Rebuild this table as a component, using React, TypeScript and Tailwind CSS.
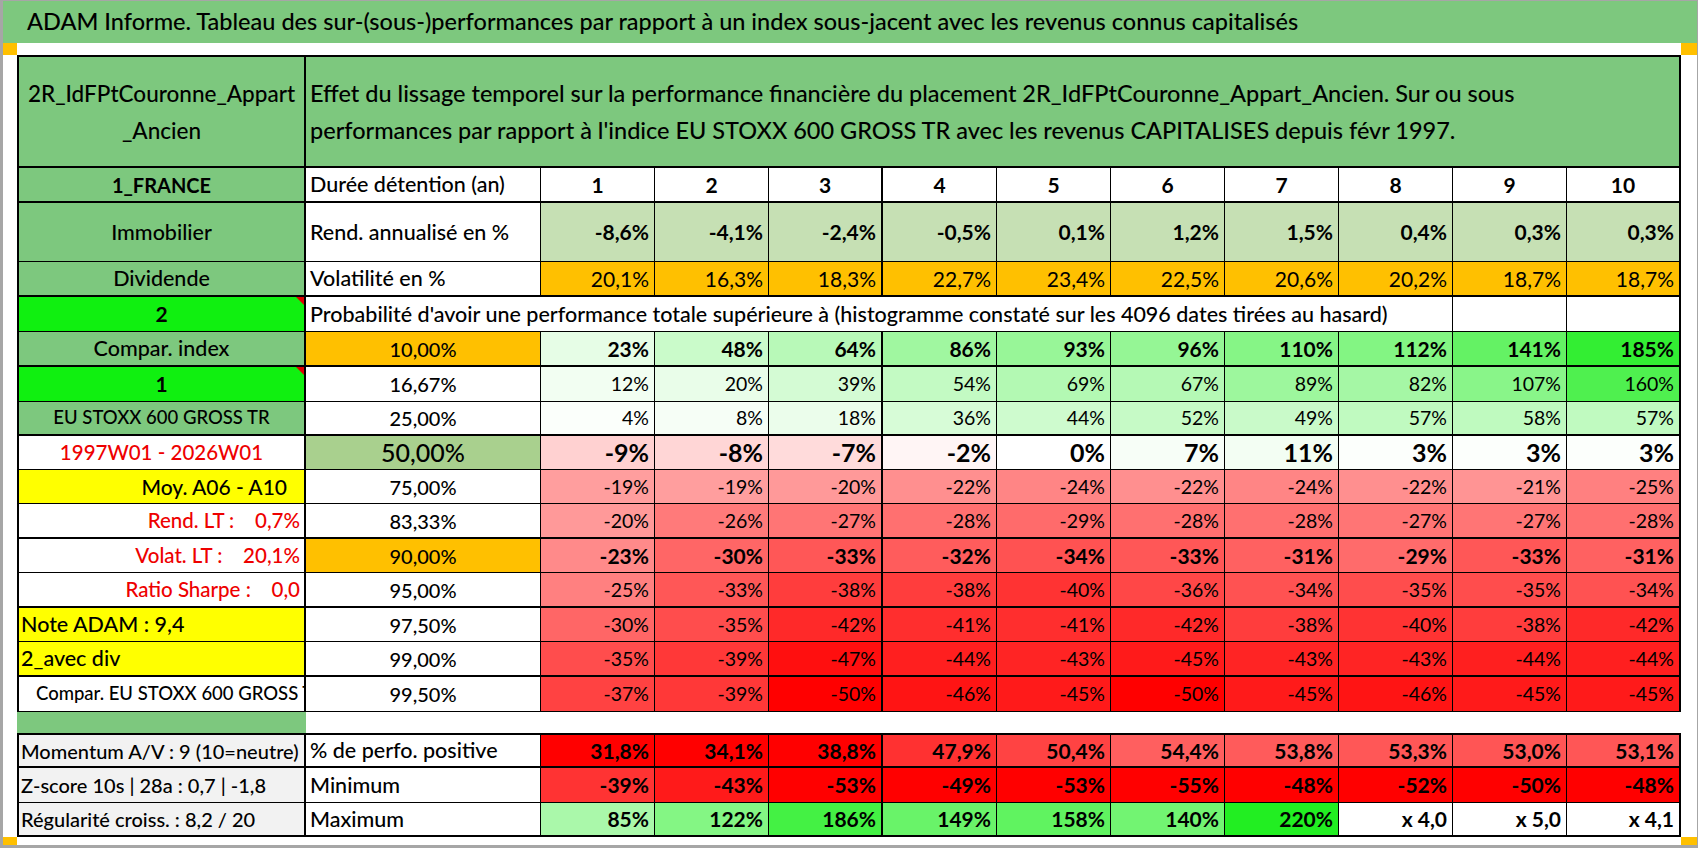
import React from 'react';

type RGB = [number, number, number];

const WHITE: RGB = [255, 255, 255];
const RED: RGB = [255, 0, 0];
const GREEN: RGB = [51, 238, 51];

function mix(to: RGB, t: number) {
  const k = Math.max(0, Math.min(1, t));
  const c = WHITE.map((w, i) => Math.round(w + (to[i] - w) * k));
  return `rgb(${c[0]}, ${c[1]}, ${c[2]})`;
}

// échelle commune au bloc des probabilités : rouge -50% / blanc 0 / vert 185%
const probColor = (v: number) => (v >= 0 ? mix(GREEN, v / 185) : mix(RED, -v / 50));
const posColor = (v: number) => mix(RED, (77 - v) / 36);
const minColor = (v: number) => mix(RED, (-v - 7) / 40);
const maxColor = (v: number) => mix([34, 238, 34], v / 220);

const pct = (v: number) => `${v}%`;
const pct1 = (v: number) => `${v.toFixed(1).replace('.', ',')}%`;

const GRID = 'grid grid-cols-[289px_235px_repeat(10,114px)]';

const BOLD = 'text-[21px] font-bold';
const LIGHT = 'text-[19.5px] font-normal';
const BIG = 'text-[25px] font-bold';

function rightBorder(col: number) {
  return col === 0 || col === 4 || col === 11 ? 'border-r-2' : 'border-r';
}

type CellProps = {
  col: number;
  thick?: boolean;
  top?: boolean;
  className?: string;
  style?: React.CSSProperties;
  children?: React.ReactNode;
};

function Cell({ col, thick, top, className = '', style, children }: CellProps) {
  return (
    <div
      className={`relative flex min-w-0 items-center overflow-hidden whitespace-nowrap border-black ${rightBorder(col)} ${
        thick ? 'border-b-2' : 'border-b'
      } ${top ? 'border-t-2' : ''} ${col === 0 ? 'border-l-2' : ''} ${className}`}
      style={style}
    >
      {children}
    </div>
  );
}

type ValuesProps = {
  vals: number[];
  thick?: boolean;
  top?: boolean;
  color: (v: number) => string;
  fmt?: (v: number) => string;
  text: string;
};

function Values({ vals, thick, top, color, fmt = pct, text }: ValuesProps) {
  return (
    <>
      {vals.map((v, i) => (
        <Cell
          key={i}
          col={i + 2}
          thick={thick}
          top={top}
          className={`justify-end pr-[5px] ${text}`}
          style={{ backgroundColor: color(v) }}
        >
          {fmt(v)}
        </Cell>
      ))}
    </>
  );
}

function Flag() {
  return <span className="absolute right-0 top-0 h-0 w-0 border-l-[8px] border-t-[8px] border-l-transparent border-t-[#e00000]" />;
}

const rend = [-8.6, -4.1, -2.4, -0.5, 0.1, 1.2, 1.5, 0.4, 0.3, 0.3];
const vol = [20.1, 16.3, 18.3, 22.7, 23.4, 22.5, 20.6, 20.2, 18.7, 18.7];
const positive = [31.8, 34.1, 38.8, 47.9, 50.4, 54.4, 53.8, 53.3, 53.0, 53.1];
const minimum = [-39, -43, -53, -49, -53, -55, -48, -52, -50, -48];
const maximum = [85, 122, 186, 149, 158, 140, 220];

type ProbRow = {
  h: string;
  thick: boolean;
  label: React.ReactNode;
  labelCls: string;
  level: string;
  levelCls: string;
  vals: number[];
  text: string;
  flag?: boolean;
};

const probRows: ProbRow[] = [
  {
    h: 'h-[35px]', thick: true, label: 'Compar. index', labelCls: 'justify-center bg-[#7dc87e] text-[21.5px] font-medium',
    level: '10,00%', levelCls: 'bg-[#ffc000]', vals: [23, 48, 64, 86, 93, 96, 110, 112, 141, 185], text: BOLD,
  },
  {
    h: 'h-[35px]', thick: false, label: '1', labelCls: 'justify-center bg-[#10f010] text-[21px] font-bold', flag: true,
    level: '16,67%', levelCls: '', vals: [12, 20, 39, 54, 69, 67, 89, 82, 107, 160], text: LIGHT,
  },
  {
    h: 'h-[34px]', thick: true, label: 'EU STOXX 600 GROSS TR', labelCls: 'justify-center bg-[#7dc87e] text-[18.5px] font-medium',
    level: '25,00%', levelCls: '', vals: [4, 8, 18, 36, 44, 52, 49, 57, 58, 57], text: LIGHT,
  },
  {
    h: 'h-[34px]', thick: false, label: '1997W01 - 2026W01', labelCls: 'justify-center text-[20.5px] font-medium text-[#ee0000]',
    level: '50,00%', levelCls: 'bg-[#a9d08e] text-[25px]', vals: [-9, -8, -7, -2, 0, 7, 11, 3, 3, 3], text: BIG,
  },
  {
    h: 'h-[34px]', thick: false, label: 'Moy. A06 - A10', labelCls: 'justify-end pr-[17px] bg-[#ffff00] text-[21px] font-medium',
    level: '75,00%', levelCls: '', vals: [-19, -19, -20, -22, -24, -22, -24, -22, -21, -25], text: LIGHT,
  },
  {
    h: 'h-[35px]', thick: true, label: 'Rend. LT :    0,7%', labelCls: 'justify-end pr-[4px] text-[20.5px] font-medium text-[#ee0000] whitespace-pre',
    level: '83,33%', levelCls: '', vals: [-20, -26, -27, -28, -29, -28, -28, -27, -27, -28], text: LIGHT,
  },
  {
    h: 'h-[34px]', thick: false, label: 'Volat. LT :    20,1%', labelCls: 'justify-end pr-[4px] text-[20.5px] font-medium text-[#ee0000] whitespace-pre',
    level: '90,00%', levelCls: 'bg-[#ffc000]', vals: [-23, -30, -33, -32, -34, -33, -31, -29, -33, -31], text: BOLD,
  },
  {
    h: 'h-[35px]', thick: true, label: 'Ratio Sharpe :    0,0', labelCls: 'justify-end pr-[4px] text-[20.5px] font-medium text-[#ee0000] whitespace-pre',
    level: '95,00%', levelCls: '', vals: [-25, -33, -38, -38, -40, -36, -34, -35, -35, -34], text: LIGHT,
  },
  {
    h: 'h-[34px]', thick: false, label: 'Note ADAM : 9,4', labelCls: 'justify-start pl-[2px] bg-[#ffff00] text-[21.5px] font-medium',
    level: '97,50%', levelCls: '', vals: [-30, -35, -42, -41, -41, -42, -38, -40, -38, -42], text: LIGHT,
  },
  {
    h: 'h-[35px]', thick: true, label: '2_avec div', labelCls: 'justify-start pl-[2px] bg-[#ffff00] text-[21.5px] font-medium',
    level: '99,00%', levelCls: '', vals: [-35, -39, -47, -44, -43, -45, -43, -43, -44, -44], text: LIGHT,
  },
  {
    h: 'h-[35px]', thick: false, label: 'Compar. EU STOXX 600 GROSS TR', labelCls: 'justify-start pl-[17px] text-[18.5px] font-medium',
    level: '99,50%', levelCls: '', vals: [-37, -39, -50, -46, -45, -50, -45, -46, -45, -45], text: LIGHT,
  },
];

export default function App() {
  return (
    <div className="flex h-[848px] w-[1698px] flex-col overflow-hidden border border-b-[3px] border-l-[3px] border-[#a6a6a6] bg-white font-['Lato',sans-serif] text-black">
      <div className="flex h-[42px] shrink-0 items-center bg-[#7dc87e] pl-[24px] text-[23.5px] font-medium">
        ADAM Informe. Tableau des sur-(sous-)performances par rapport à un index sous-jacent avec les revenus connus capitalisés
      </div>
      <div className="flex h-[12px] shrink-0 justify-between">
        <div className="w-[14px] bg-[#ffc000]" />
        <div className="w-[16px] bg-[#ffc000]" />
      </div>

      <div className="flex shrink-0">
        <div className="w-[14px]" />
        <div className="w-[1664px]">
          {/* en-tête */}
          <div className={`${GRID} h-[113px]`}>
            <Cell col={0} top thick className="flex-col justify-center bg-[#7dc87e] text-[22.5px] font-medium leading-[37px]">
              <span>2R_IdFPtCouronne_Appart</span>
              <span>_Ancien</span>
            </Cell>
            <Cell col={11} top thick className="col-span-11 flex-col items-start justify-center bg-[#7dc87e] pl-[4px] text-[23.5px] font-medium leading-[37px]">
              <span>Effet du lissage temporel sur la performance financière du placement 2R_IdFPtCouronne_Appart_Ancien. Sur ou sous</span>
              <span>performances par rapport à l'indice EU STOXX 600 GROSS TR avec les revenus CAPITALISES depuis févr 1997.</span>
            </Cell>
          </div>

          <div className={`${GRID} h-[35px]`}>
            <Cell col={0} thick className="justify-center bg-[#7dc87e] text-[20px] font-bold">1_FRANCE</Cell>
            <Cell col={1} thick className="pl-[4px] text-[21.5px] font-medium">Durée détention (an)</Cell>
            {[1, 2, 3, 4, 5, 6, 7, 8, 9, 10].map((n, i) => (
              <Cell key={n} col={i + 2} thick className={`justify-center ${BOLD}`}>{n}</Cell>
            ))}
          </div>

          <div className={`${GRID} h-[59px]`}>
            <Cell col={0} className="justify-center bg-[#7dc87e] text-[21.5px] font-medium">Immobilier</Cell>
            <Cell col={1} className="pl-[4px] text-[21.5px] font-medium">Rend. annualisé en %</Cell>
            <Values vals={rend} color={() => '#c6e0b4'} fmt={pct1} text={BOLD} />
          </div>

          <div className={`${GRID} h-[35px]`}>
            <Cell col={0} thick className="justify-center bg-[#7dc87e] text-[21.5px] font-medium">Dividende</Cell>
            <Cell col={1} thick className="pl-[4px] text-[21.5px] font-medium">Volatilité en %</Cell>
            <Values vals={vol} thick color={() => '#ffc000'} fmt={pct1} text="text-[21px] font-normal" />
          </div>

          <div className={`${GRID} h-[35px]`}>
            <Cell col={0} className="justify-center bg-[#10f010] text-[21px] font-bold">
              2
              <Flag />
            </Cell>
            <Cell col={9} className="col-span-9 pl-[4px] text-[21.5px] font-medium">
              Probabilité d'avoir une performance totale supérieure à (histogramme constaté sur les 4096 dates tirées au hasard)
            </Cell>
            <Cell col={10} />
            <Cell col={11} />
          </div>

          {probRows.map((r) => (
            <div key={r.level} className={`${GRID} ${r.h}`}>
              <Cell col={0} thick={r.thick} className={r.labelCls}>
                {r.label}
                {r.flag && <Flag />}
              </Cell>
              <Cell col={1} thick={r.thick} className={`justify-center text-[20px] font-medium ${r.levelCls}`}>
                {r.level}
              </Cell>
              <Values vals={r.vals} thick={r.thick} color={probColor} text={r.text} />
            </div>
          ))}

          <div className={`${GRID} h-[21px]`}>
            <div className="bg-[#7dc87e]" />
          </div>

          <div className={`${GRID} h-[35px]`}>
            <Cell col={0} top thick className="bg-[#f2f2f2] pl-[2px] text-[20px] font-medium">Momentum A/V : 9 (10=neutre)</Cell>
            <Cell col={1} top thick className="pl-[4px] text-[21.5px] font-medium">% de perfo. positive</Cell>
            <Values vals={positive} top thick color={posColor} fmt={pct1} text={BOLD} />
          </div>
          <div className={`${GRID} h-[35px]`}>
            <Cell col={0} className="bg-[#f2f2f2] pl-[2px] text-[20px] font-medium">Z-score 10s | 28a : 0,7 | -1,8</Cell>
            <Cell col={1} className="pl-[4px] text-[21.5px] font-medium">Minimum</Cell>
            <Values vals={minimum} color={minColor} text={BOLD} />
          </div>
          <div className={`${GRID} h-[34px]`}>
            <Cell col={0} thick className="bg-[#f2f2f2] pl-[2px] text-[20px] font-medium">Régularité croiss. : 8,2 / 20</Cell>
            <Cell col={1} thick className="pl-[4px] text-[21.5px] font-medium">Maximum</Cell>
            <Values vals={maximum} thick color={maxColor} text={BOLD} />
            {['x 4,0', 'x 5,0', 'x 4,1'].map((t, i) => (
              <Cell key={t} col={i + 9} thick className={`justify-end pr-[5px] ${BOLD}`}>{t}</Cell>
            ))}
          </div>
        </div>
      </div>

      <div className="flex flex-1 items-end justify-between">
        <div className="h-[10px] w-[14px] bg-[#ffc000]" />
        <div className="h-[10px] w-[16px] bg-[#ffc000]" />
      </div>
    </div>
  );
}
